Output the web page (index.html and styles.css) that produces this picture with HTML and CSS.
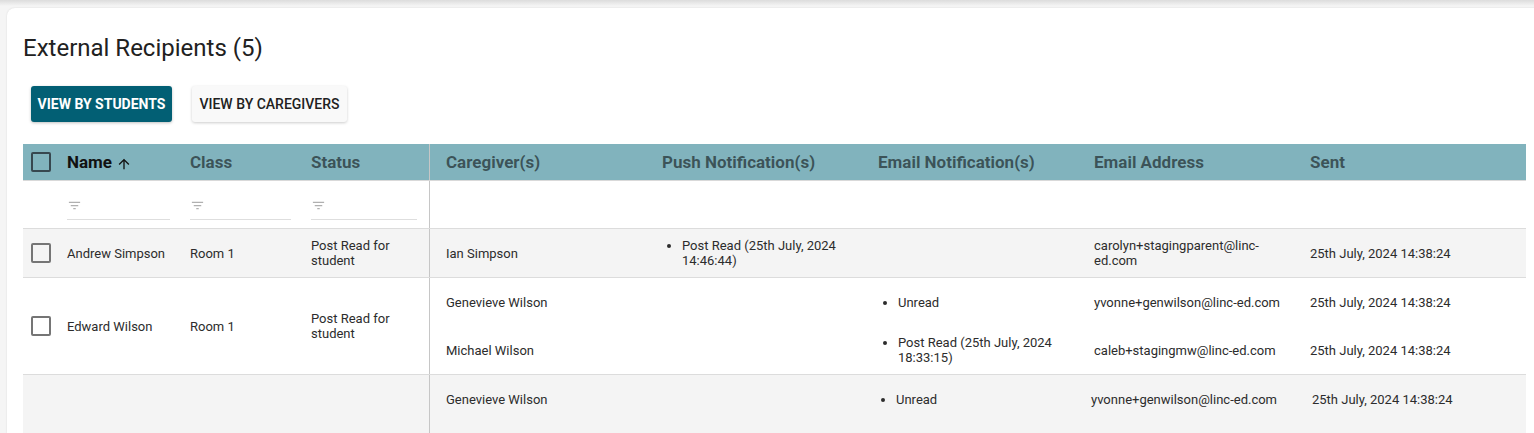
FILE: index.html
```html
<!DOCTYPE html>
<html lang="en">
<head>
<meta charset="utf-8">
<title>External Recipients</title>
<link rel="stylesheet" href="styles.css">
</head>
<body>
<div class="card">
  <h2 class="title">External Recipients (5)</h2>
  <div class="toggle">
    <button class="btn btn-primary">VIEW BY STUDENTS</button>
    <button class="btn btn-secondary">VIEW BY CAREGIVERS</button>
  </div>

  <div class="table">
    <div class="row thead">
      <div class="left">
        <div class="c-chk"><span class="chk chk-head"></span></div>
        <div class="c-name th active">Name
          <svg class="sort" viewBox="0 0 24 24" width="16" height="16"><path d="M4 12l1.41 1.41L11 7.830V20h2V7.83l5.58 5.59L20 12l-8-8-8 8z" fill="currentColor"/></svg>
        </div>
        <div class="c-class th">Class</div>
        <div class="c-status th">Status</div>
      </div>
      <div class="right">
        <div class="sub">
          <div class="cell th">Caregiver(s)</div>
          <div class="cell th">Push Notification(s)</div>
          <div class="cell th">Email Notification(s)</div>
          <div class="cell th">Email Address</div>
          <div class="cell th">Sent</div>
        </div>
      </div>
    </div>

    <div class="row filters">
      <div class="left">
        <div class="c-chk"></div>
        <div class="c-name"><div class="filter f-name"><svg viewBox="0 0 24 24" width="15" height="15"><path d="M10 18h4v-2h-4v2zM3 6v2h18V6H3zm3 7h12v-2H6v2z" fill="currentColor"/></svg></div></div>
        <div class="c-class"><div class="filter f-class"><svg viewBox="0 0 24 24" width="15" height="15"><path d="M10 18h4v-2h-4v2zM3 6v2h18V6H3zm3 7h12v-2H6v2z" fill="currentColor"/></svg></div></div>
        <div class="c-status"><div class="filter f-status"><svg viewBox="0 0 24 24" width="15" height="15"><path d="M10 18h4v-2h-4v2zM3 6v2h18V6H3zm3 7h12v-2H6v2z" fill="currentColor"/></svg></div></div>
      </div>
      <div class="right"></div>
    </div>

    <div class="row striped">
      <div class="left">
        <div class="c-chk"><span class="chk"></span></div>
        <div class="c-name">Andrew Simpson</div>
        <div class="c-class">Room 1</div>
        <div class="c-status">Post Read for student</div>
      </div>
      <div class="right">
        <div class="sub">
          <div class="cell">Ian Simpson</div>
          <div class="cell"><ul class="list"><li>Post Read (25th July, 2024 14:46:44)</li></ul></div>
          <div class="cell"></div>
          <div class="cell">carolyn+stagingparent@linc-ed.com</div>
          <div class="cell">25th July, 2024 14:38:24</div>
        </div>
      </div>
    </div>

    <div class="row">
      <div class="left">
        <div class="c-chk"><span class="chk"></span></div>
        <div class="c-name">Edward Wilson</div>
        <div class="c-class">Room 1</div>
        <div class="c-status">Post Read for student</div>
      </div>
      <div class="right">
        <div class="sub">
          <div class="cell">Genevieve Wilson</div>
          <div class="cell"></div>
          <div class="cell"><ul class="list"><li>Unread</li></ul></div>
          <div class="cell">yvonne+genwilson@linc-ed.com</div>
          <div class="cell">25th July, 2024 14:38:24</div>
        </div>
        <div class="sub">
          <div class="cell">Michael Wilson</div>
          <div class="cell"></div>
          <div class="cell"><ul class="list"><li>Post Read (25th July, 2024 18:33:15)</li></ul></div>
          <div class="cell">caleb+stagingmw@linc-ed.com</div>
          <div class="cell">25th July, 2024 14:38:24</div>
        </div>
      </div>
    </div>

    <div class="row striped last">
      <div class="left">
        <div class="c-chk"></div>
        <div class="c-name"></div>
        <div class="c-class"></div>
        <div class="c-status"></div>
      </div>
      <div class="right">
        <div class="sub sub-alt">
          <div class="cell">Genevieve Wilson</div>
          <div class="cell"></div>
          <div class="cell"><ul class="list"><li>Unread</li></ul></div>
          <div class="cell">yvonne+genwilson@linc-ed.com</div>
          <div class="cell">25th July, 2024 14:38:24</div>
        </div>
      </div>
    </div>
  </div>
</div>
</body>
</html>
```

FILE: styles.css
```css
* { box-sizing: border-box; }

html, body {
  margin: 0;
  height: 100%;
  overflow: hidden;
}

body {
  background: linear-gradient(#dcdcdc, #f5f5f5 6px) no-repeat, #f5f5f5;
  font-family: Roboto, "Liberation Sans", Arial, sans-serif;
  color: #2c2c2c;
}

.card {
  margin: 8px 0 0 7px;
  width: 1570px;
  height: calc(100vh - 8px);
  overflow: hidden;
  background: #fff;
  border-radius: 8px 8px 0 0;
  box-shadow: 0 0 2px rgba(0, 0, 0, 0.12);
  padding: 24px 16px 0;
}

.title {
  margin: 0;
  font-size: 24px;
  line-height: 32px;
  font-weight: 400;
  color: #212121;
}

.toggle {
  display: flex;
  gap: 20px;
  margin-top: 22px;
  padding-left: 8px;
}

.btn {
  height: 36px;
  border: none;
  border-radius: 3px;
  font-family: Roboto, "Liberation Sans", Arial, sans-serif;
  font-size: 14px;
  padding: 0;
  text-align: center;
}

.btn-primary {
  width: 141px;
  background: #025f74;
  color: #fff;
  font-weight: 700;
  box-shadow: 0 1px 3px rgba(0, 0, 0, 0.25);
}

.btn-secondary {
  width: 155px;
  background: #f9f9f9;
  color: #212121;
  font-weight: 500;
  box-shadow: 0 1px 3px rgba(0, 0, 0, 0.2);
}

.table {
  margin-top: 22px;
  width: 1503px;
  font-size: 13px;
  line-height: 15px;
}

.row {
  display: flex;
  border-bottom: 1px solid #dcdcdc;
}

.row.last { border-bottom: none; min-height: 80px; }

.striped { background: #f4f4f4; }

.left {
  width: 406px;
  flex: none;
  display: flex;
  align-items: center;
}

.right {
  flex: 1;
  border-left: 1px solid #c6c6c6;
}

.c-chk { width: 44px; flex: none; padding-left: 8px; display: flex; align-items: center; }
.c-name { width: 123px; flex: none; padding-right: 8px; }
.c-class { width: 121px; flex: none; padding-right: 8px; }
.c-status { width: 118px; flex: none; padding-right: 8px; }

.chk {
  display: block;
  width: 20px;
  height: 20px;
  border: 2px solid #757575;
  border-radius: 2px;
}

.chk-head { border-color: #37474f; }

.sub {
  display: grid;
  grid-template-columns: 216px 216px 216px 216px 1fr;
  min-height: 48px;
  align-items: center;
}

.sub-alt {
  grid-template-columns: 216px 214px 215px 221px 1fr;
}

.cell {
  padding: 0 8px 0 16px;
}

.thead {
  background: #81b3bd;
  height: 37px;
  border-bottom: 1px solid #d9d9d9;
}

.thead .sub { min-height: 36px; height: 36px; }
.thead .left { height: 36px; }

.th {
  font-size: 17px;
  font-weight: 700;
  color: rgba(0, 0, 0, 0.55);
  line-height: 20px;
}

.th.active {
  color: #111;
  display: flex;
  align-items: center;
  gap: 4px;
}

.sort { color: #111; margin-top: 3px; }

.filters { height: 48px; background: #fff; }
.filters .left { height: 47px; }

.filter {
  height: 30px;
  border-bottom: 1px solid #dedede;
  display: flex;
  align-items: center;
  padding-left: 0;
  padding-top: 3px;
  color: #b0b0b0;
}

.f-name { width: 103px; }
.f-class { width: 101px; }
.f-status { width: 106px; }

.list {
  margin: 0;
  padding-left: 20px;
}
```
